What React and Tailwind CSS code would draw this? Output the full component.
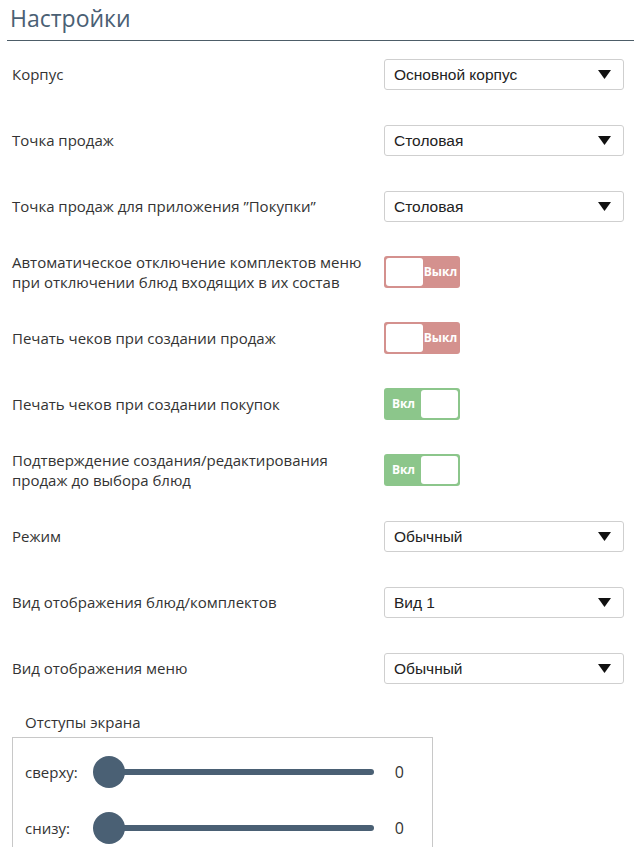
import { useState } from "react";

const Select = ({ value }) => (
  <div className="w-[240px] h-[31px] border border-[#cfcfcf] rounded-[3px] bg-white flex items-center justify-between pl-[9px] pr-[12px] pt-[1px] font-['Liberation_Sans',sans-serif] text-[15.5px] text-[#222]">
    <span>{value}</span>
    <svg width="13" height="9" viewBox="0 0 13 9">
      <path d="M0 0h13L6.5 9z" fill="#111" />
    </svg>
  </div>
);

const Toggle = ({ on }) =>
  on ? (
    <div className="w-[76px] h-[32px] rounded-[3px] bg-[#8cc68b] flex items-center p-[2px]">
      <span className="flex-1 text-center text-white text-[12px] font-bold">Вкл</span>
      <div className="w-[37px] h-full bg-white rounded-[3px]" />
    </div>
  ) : (
    <div className="w-[76px] h-[32px] rounded-[3px] bg-[#d4918e] flex items-center p-[2px]">
      <div className="w-[37px] h-full bg-white rounded-[3px]" />
      <span className="flex-1 text-center text-white text-[12px] font-bold">Выкл</span>
    </div>
  );

const Row = ({ label, children }) => (
  <div className="h-[66px] flex items-center justify-between pl-[12px] pr-[10px]">
    <div className="text-[15px] leading-[20px] text-[#333]">{label}</div>
    <div className="w-[240px] shrink-0">{children}</div>
  </div>
);

const Slider = ({ label }) => (
  <div className="h-[56px] flex items-center pl-[12px] pr-[28px]">
    <span className="w-[82px] text-[15px] text-[#333]">{label}</span>
    <div className="relative flex-1 h-[6px] bg-[#4a6074] rounded-full">
      <div className="absolute left-[-14px] top-1/2 -translate-y-1/2 w-[32px] h-[32px] rounded-full bg-[#4a6074]" />
    </div>
    <span className="w-[30px] text-right text-[16px] text-[#333]">0</span>
  </div>
);

export default function App() {
  const [rows] = useState([
    { label: "Корпус", select: "Основной корпус" },
    { label: "Точка продаж", select: "Столовая" },
    { label: "Точка продаж для приложения \u201dПокупки\u201d", select: "Столовая" },
    {
      label: (
        <>
          Автоматическое отключение комплектов меню
          <br />
          при отключении блюд входящих в их состав
        </>
      ),
      toggle: false,
    },
    { label: "Печать чеков при создании продаж", toggle: false },
    { label: "Печать чеков при создании покупок", toggle: true },
    {
      label: (
        <>
          Подтверждение создания/редактирования
          <br />
          продаж до выбора блюд
        </>
      ),
      toggle: true,
    },
    { label: "Режим", select: "Обычный" },
    { label: "Вид отображения блюд/комплектов", select: "Вид 1" },
    { label: "Вид отображения меню", select: "Обычный" },
  ]);

  return (
    <div className="w-[634px] h-[847px] overflow-hidden bg-white font-['Open_Sans',sans-serif]">
      <div className="ml-[7px] border-b border-[#4d5d68] h-[41px] pl-[3px] pt-[3px]">
        <h1 className="text-[23px] leading-[30px] text-[#4a6074]">Настройки</h1>
      </div>
      <div>
        {rows.map((r, i) => (
          <Row key={i} label={r.label}>
            {r.select !== undefined ? <Select value={r.select} /> : <Toggle on={r.toggle} />}
          </Row>
        ))}
      </div>
      <div className="pl-[25px] pt-[11px] text-[15px] leading-[20px] text-[#333]">Отступы экрана</div>
      <div className="ml-[12px] mt-[5px] w-[421px] border border-[#c8c8c8] pt-[6px] pb-[20px]">
        <Slider label="сверху:" />
        <Slider label="снизу:" />
      </div>
    </div>
  );
}
